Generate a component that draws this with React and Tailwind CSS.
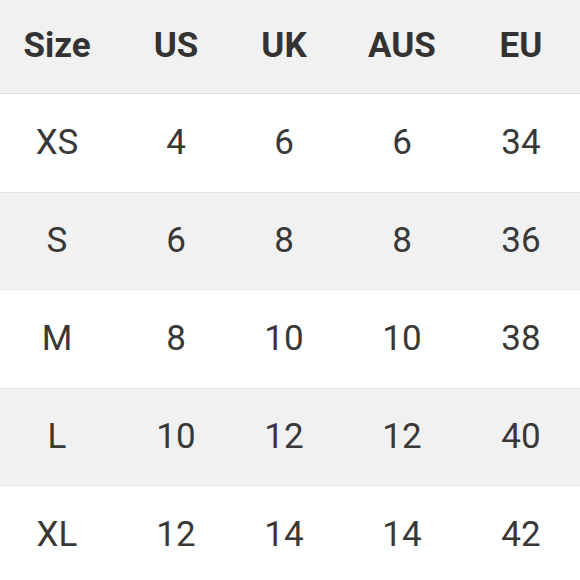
import React from "react";

const headers = ["Size", "US", "UK", "AUS", "EU"];

const rows = [
  ["XS", "4", "6", "6", "34"],
  ["S", "6", "8", "8", "36"],
  ["M", "8", "10", "10", "38"],
  ["L", "10", "12", "12", "40"],
  ["XL", "12", "14", "14", "42"],
];

function App() {
  return (
    <div
      className="w-[580px] h-[580px] overflow-hidden bg-white text-[#383838]"
      style={{ fontFamily: "Roboto, 'Liberation Sans', sans-serif" }}
    >
      {/* Header */}
      <div className="grid grid-cols-[114px_124px_92px_144px_106px] h-[94px] items-center bg-[#f1f1f1] border-b border-[#e3e3e3] text-[35px] font-bold text-[#333]">
        {headers.map((h, j) => (
          <div key={h} className={j === 4 ? "text-center pr-[12px]" : "text-center"}>{h}</div>
        ))}
      </div>

      {/* Rows */}
      {rows.map((row, i) => (
        <div
          key={row[0]}
          className={
            i % 2 === 0
              ? "grid grid-cols-[114px_124px_92px_144px_106px] h-[98px] items-center bg-white text-[35px]"
              : "grid grid-cols-[114px_124px_92px_144px_106px] h-[98px] items-center bg-[#f1f1f1] border-y border-[#e6e6e6] text-[35px]"
          }
        >
          {row.map((cell, j) => (
            <div key={j} className={j === 4 ? "text-center pr-[12px]" : "text-center"}>{cell}</div>
          ))}
        </div>
      ))}
    </div>
  );
}

export default App;
